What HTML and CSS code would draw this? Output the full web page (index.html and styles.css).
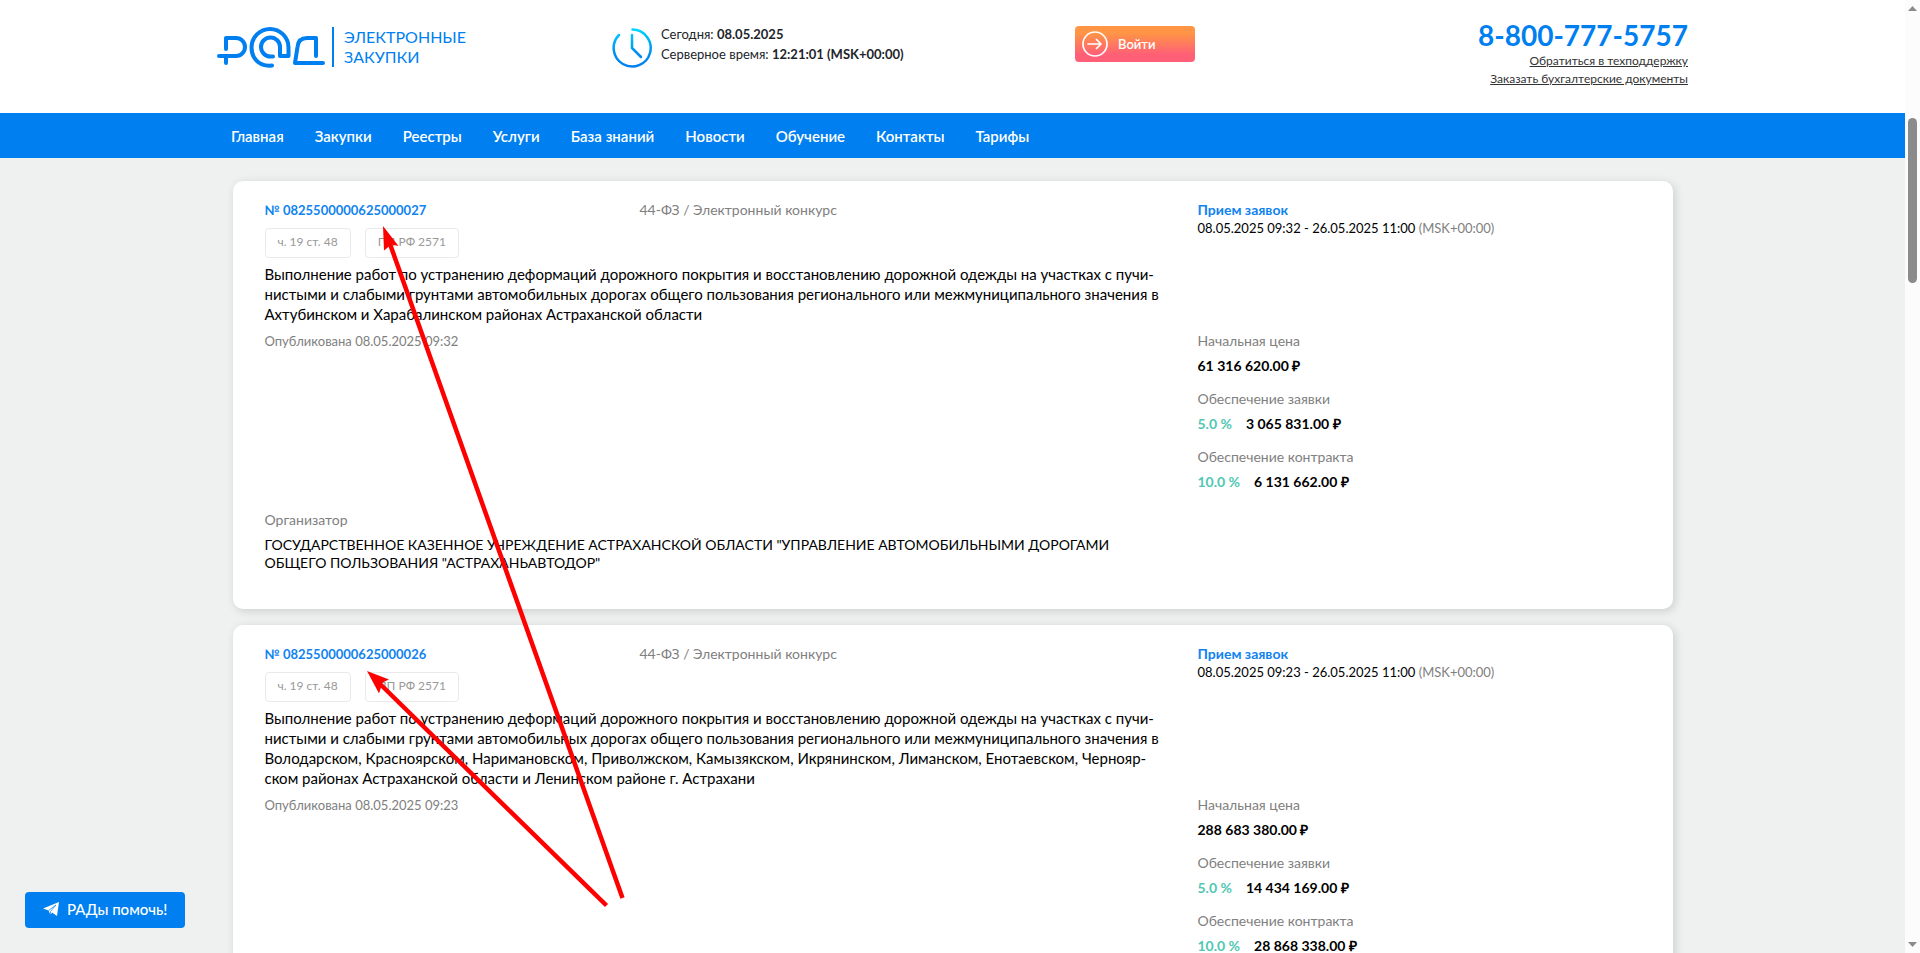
FILE: index.html
```html
<!DOCTYPE html>
<html lang="ru">
<head>
  <meta charset="UTF-8">
  <title>РАД — Электронные закупки</title>
  <link rel="stylesheet" href="styles.css">
</head>
<body>

  <div class="page">
    <header class="header">
      <div class="header-inner">
        <a class="logo" href="#">
          <svg class="logo-mark" viewBox="217 24 110 46" fill="none" stroke="#007ff0" stroke-width="4" stroke-linecap="round" stroke-linejoin="round" aria-label="РАД">
            <path d="M226 49V38h10a9 9 0 0 1 0 18h-17M226 56v7" />
            <path d="M272 65.500C258 67 251.500 57 251.500 47.500a18.500 18.500 0 0 1 37 0V56H280v-9a9.500 9.500 0 1 0-9.500 9.500h2.500" />
            <path d="M316 56V38h-9c-6 0-9 3-9.500 9L295 63h28" />
          </svg>
          <span class="logo-text">ЭЛЕКТРОННЫЕ<br>ЗАКУПКИ</span>
        </a>

        <div class="clock">
          <svg class="clock-icon" viewBox="0 0 40 40" fill="none" stroke="url(#clockFill)" stroke-width="2.500" stroke-linecap="round">
            <defs>
              <linearGradient id="clockFill" gradientUnits="userSpaceOnUse" x1="0" y1="0" x2="0" y2="40">
                <stop offset="0" stop-color="#00d8ff" />
                <stop offset="0.600" stop-color="#0090f0" />
                <stop offset="1" stop-color="#007ff0" />
              </linearGradient>
            </defs>
            <path d="M20.500 1.500A18.500 18.500 0 1 1 7 7" />
            <path d="M20 7v13l9 9" />
          </svg>
          <div class="clock-text">
            <div>Сегодня: <b>08.05.2025</b></div>
            <div>Серверное время: <b>12:21:01 (MSK+00:00)</b></div>
          </div>
        </div>

        <button class="login-btn" type="button">
          <svg class="login-icon" viewBox="0 0 26 26" fill="none" stroke="#fff" stroke-width="1.700" stroke-linecap="round" stroke-linejoin="round">
            <circle cx="13" cy="13" r="12" />
            <path d="M6 13h13M14.500 8.500L19 13l-4.500 4.500" />
          </svg>
          Войти
        </button>

        <div class="contacts">
          <a class="phone" href="tel:88007775757">8-800-777-5757</a>
          <a class="help-link" href="#">Обратиться в техподдержку</a>
          <a class="help-link" href="#">Заказать бухгалтерские документы</a>
        </div>
      </div>
    </header>

    <nav class="nav">
      <div class="nav-inner">
        <a href="#">Главная</a>
        <a href="#">Закупки</a>
        <a href="#">Реестры</a>
        <a href="#">Услуги</a>
        <a href="#">База знаний</a>
        <a href="#">Новости</a>
        <a href="#">Обучение</a>
        <a href="#">Контакты</a>
        <a href="#">Тарифы</a>
      </div>
    </nav>

    <main class="list">
      <article class="card">
        <div class="card-main">
          <div class="card-head">
            <a class="number" href="#">№ 0825500000625000027</a>
            <span class="muted">44-ФЗ / Электронный конкурс</span>
          </div>
          <div class="tags">
            <span class="tag">ч. 19 ст. 48</span>
            <span class="tag">ПП РФ 2571</span>
          </div>
          <p class="title">Выполнение работ по устранению деформаций дорожного покрытия и восстановлению дорожной одежды на участках с пучи-<br>нистыми и слабыми грунтами автомобильных дорогах общего пользования регионального или межмуниципального значения в<br>Ахтубинском и Харабалинском районах Астраханской области</p>
        </div>
        <div class="status">
          <div class="stage">Прием заявок</div>
          <div class="dates">08.05.2025 09:32 - 26.05.2025 11:00 <span class="muted">(MSK+00:00)</span></div>
        </div>

        <div class="published muted">Опубликована 08.05.2025 09:32</div>
        <dl class="prices">
          <div class="price">
            <dt>Начальная цена</dt>
            <dd>61 316 620.00 ₽</dd>
          </div>
          <div class="price">
            <dt>Обеспечение заявки</dt>
            <dd><span class="percent">5.0 %</span>3 065 831.00 ₽</dd>
          </div>
          <div class="price">
            <dt>Обеспечение контракта</dt>
            <dd><span class="percent">10.0 %</span>6 131 662.00 ₽</dd>
          </div>
        </dl>

        <div class="organizer">
          <div class="muted">Организатор</div>
          <div class="organizer-name">ГОСУДАРСТВЕННОЕ КАЗЕННОЕ УЧРЕЖДЕНИЕ АСТРАХАНСКОЙ ОБЛАСТИ "УПРАВЛЕНИЕ АВТОМОБИЛЬНЫМИ ДОРОГАМИ<br>ОБЩЕГО ПОЛЬЗОВАНИЯ "АСТРАХАНЬАВТОДОР"</div>
        </div>
      </article>

      <article class="card">
        <div class="card-main">
          <div class="card-head">
            <a class="number" href="#">№ 0825500000625000026</a>
            <span class="muted">44-ФЗ / Электронный конкурс</span>
          </div>
          <div class="tags">
            <span class="tag">ч. 19 ст. 48</span>
            <span class="tag">ПП РФ 2571</span>
          </div>
          <p class="title">Выполнение работ по устранению деформаций дорожного покрытия и восстановлению дорожной одежды на участках с пучи-<br>нистыми и слабыми грунтами автомобильных дорогах общего пользования регионального или межмуниципального значения в<br>Володарском, Красноярском, Наримановском, Приволжском, Камызякском, Икрянинском, Лиманском, Енотаевском, Чернояр-<br>ском районах Астраханской области и Ленинском районе г. Астрахани</p>
        </div>
        <div class="status">
          <div class="stage">Прием заявок</div>
          <div class="dates">08.05.2025 09:23 - 26.05.2025 11:00 <span class="muted">(MSK+00:00)</span></div>
        </div>

        <div class="published muted">Опубликована 08.05.2025 09:23</div>
        <dl class="prices">
          <div class="price">
            <dt>Начальная цена</dt>
            <dd>288 683 380.00 ₽</dd>
          </div>
          <div class="price">
            <dt>Обеспечение заявки</dt>
            <dd><span class="percent">5.0 %</span>14 434 169.00 ₽</dd>
          </div>
          <div class="price">
            <dt>Обеспечение контракта</dt>
            <dd><span class="percent">10.0 %</span>28 868 338.00 ₽</dd>
          </div>
        </dl>
      </article>
    </main>
  </div>

  <div class="scrollbar">
    <svg class="scroll-arrow" viewBox="0 0 9 5" fill="#8b8b8b"><path d="M4.500 0L9 5H0z" /></svg>
    <div class="scroll-track"><div class="scroll-thumb"></div></div>
    <svg class="scroll-arrow" viewBox="0 0 9 5" fill="#8b8b8b"><path d="M0 0h9L4.500 5z" /></svg>
  </div>

  <button class="chat-btn" type="button">
    <svg class="chat-icon" viewBox="0 0 16 14" fill="#fff">
      <path d="M0 6.500L16 0l-2 14-5-3.500L7.500 13 5.500 8.500z" />
      <path d="M5.500 8.500L13 3 7.500 9.500V13" stroke="#007ff0" stroke-width="0.700" fill="none" />
    </svg>
    РАДы помочь!
  </button>

  <!-- arrows pointing at the two purchase numbers -->
  <svg class="arrows" width="640" height="920" viewBox="0 0 640 920" fill="red" stroke="red" aria-hidden="true">
    <path d="M390 244L622.500 898M378 682L606.500 905.500" stroke-width="4.500" />
    <path d="M383 226l15.500 20-7-1.500-7.500 6z" stroke="none" />
    <path d="M367 671l22 8.500-6.500 3-3.500 11z" stroke="none" />
  </svg>

</body>
</html>
```

FILE: styles.css
```css
* {
  box-sizing: border-box;
}

body {
  margin: 0;
  height: 100vh;
  display: flex;
  overflow: hidden;
  font-family: Lato, "Open Sans", sans-serif;
  font-size: 14px;
  line-height: 18px;
  color: #000;
  background-color: #eff1f1;
}

a {
  color: inherit;
  text-decoration: none;
}

button {
  border: none;
  font-family: inherit;
  color: white;
  cursor: pointer;
}

.page {
  flex: 1;
  min-width: 0;
}

/* Header */
.header {
  background-color: white;
}

.header-inner {
  display: grid;
  grid-template-columns: 395fr 463fr 120px 493fr;
  align-items: start;
  max-width: 1471px;
  height: 113px;
  margin: 0 auto;
  padding-top: 20px;
}

.logo {
  display: flex;
  align-items: center;
  gap: 5px;
  margin-top: 4px;
  color: #007ff0;
}

.logo-mark {
  width: 110px;
  height: 46px;
}

.logo-text {
  padding-left: 10px;
  border-left: 2px solid #007ff0;
  font-size: 16px;
  line-height: 20px;
}

.clock {
  display: flex;
  gap: 9px;
  padding-top: 4px;
  font-size: 13px;
  line-height: 20px;
  color: #212529;
}

.clock-icon {
  width: 40px;
  height: 40px;
  margin-top: 4px;
}

.login-btn {
  display: flex;
  align-items: center;
  gap: 10px;
  height: 36px;
  margin-top: 6px;
  padding: 0 7px;
  border-radius: 4px;
  background: linear-gradient(#ff9545 20%, #ff5f77 80%);
  font-size: 13px;
  font-weight: 600;
}

.login-icon {
  width: 26px;
  height: 26px;
}

.contacts {
  display: flex;
  flex-direction: column;
  align-items: flex-end;
}

.phone {
  margin-bottom: 2px;
  font-size: 28px;
  line-height: 30px;
  font-weight: bold;
  color: #007ff0;
}

.help-link {
  font-size: 12px;
  color: #333;
  text-decoration: underline;
}

/* Navigation */
.nav {
  background-color: #007ff0;
}

.nav-inner {
  display: flex;
  gap: 31px;
  max-width: 1443px;
  margin: 0 auto;
  padding-top: 1px;
  font-size: 15px;
  line-height: 44px;
  font-weight: 600;
  color: white;
}

/* Purchases */
.list {
  display: flex;
  flex-direction: column;
  gap: 16px;
  max-width: 1440px;
  margin: 23px auto;
}

.card {
  display: grid;
  grid-template-columns: 903fr 443fr;
  column-gap: 30px;
  padding: 20px 32px 37px;
  border-radius: 10px;
  background-color: white;
  box-shadow: 2px 2px 10px rgba(0, 0, 0, 0.15);
}

.card-main {
  min-width: 0;
}

.card-head {
  display: grid;
  grid-template-columns: 375px 1fr;
}

.number,
.stage {
  font-weight: bold;
  color: #0f83f0;
}

.number,
.dates,
.published {
  font-size: 13px;
}

.muted,
.price dt {
  color: #808080;
}

.tags {
  display: flex;
  gap: 14px;
  margin-top: 9px;
}

.tag {
  height: 30px;
  padding: 4px 12px;
  border: 1px solid #e9e9e9;
  border-radius: 4px;
  font-size: 12px;
  color: #999;
}

.title {
  margin: 6px 0 8px;
  font-size: 15px;
  line-height: 20px;
  white-space: nowrap;
}

.prices {
  display: flex;
  flex-direction: column;
  gap: 15px;
  margin: 0;
}

.price dd {
  margin: 7px 0 0;
  font-weight: bold;
}

.percent {
  margin-right: 14px;
  color: #50c8b4;
}

.organizer {
  margin-top: 20px;
}

.organizer-name {
  margin-top: 7px;
  white-space: nowrap;
}

/* Scrollbar */
.scrollbar {
  display: flex;
  flex-direction: column;
  align-items: center;
  width: 15px;
  padding: 6px 0;
  background-color: #fcfcfc;
}

.scroll-arrow {
  width: 9px;
  height: 5px;
}

.scroll-track {
  flex: 1;
  padding-top: 107px;
}

.scroll-thumb {
  width: 9px;
  height: 165px;
  border-radius: 5px;
  background-color: #8b8b8b;
}

/* Chat button */
.chat-btn {
  position: fixed;
  left: 25px;
  bottom: 25px;
  display: flex;
  align-items: center;
  gap: 8px;
  height: 36px;
  padding: 0 18px 2px;
  border-radius: 4px;
  background-color: #007ff0;
  font-size: 15px;
  font-weight: 500;
}

.chat-icon {
  width: 16px;
  height: 14px;
}

.arrows {
  position: absolute;
  top: 0;
  left: 0;
  pointer-events: none;
}
```
